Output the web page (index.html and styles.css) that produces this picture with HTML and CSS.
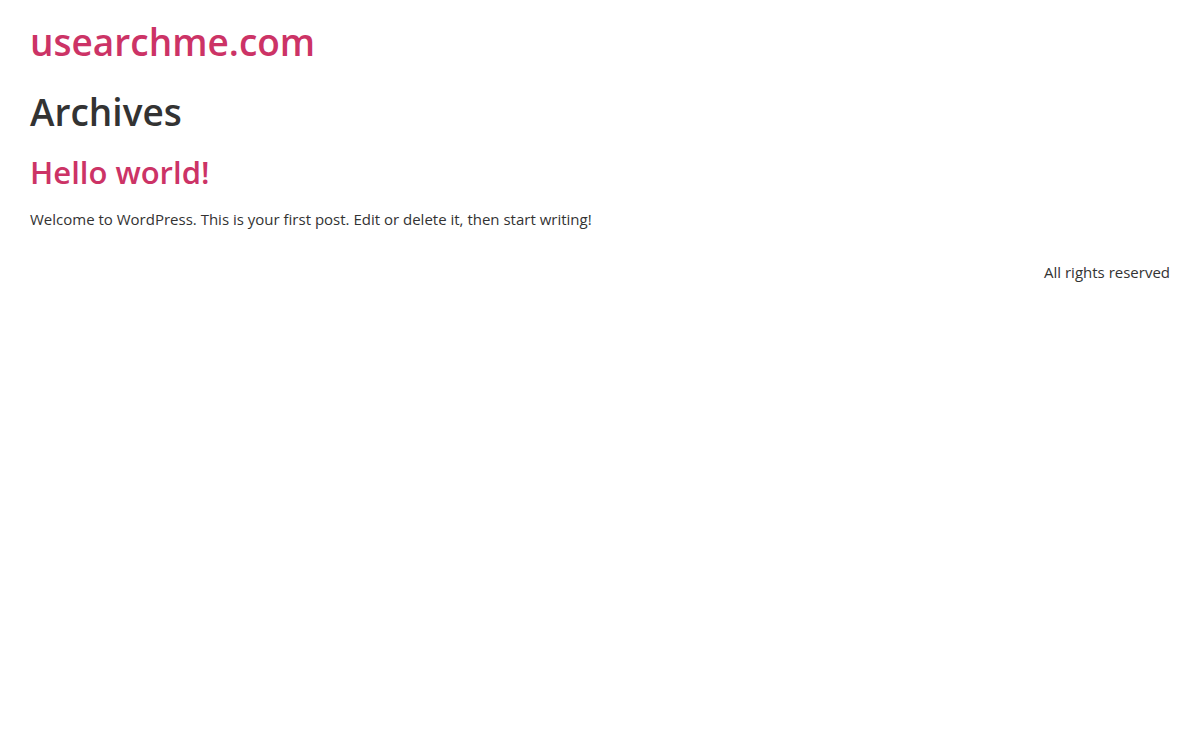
FILE: index.html
```html
<!DOCTYPE html>
<html lang="en">
<head>
<meta charset="utf-8">
<title>Archives - usearchme.com</title>
<link rel="stylesheet" href="styles.css">
</head>
<body>
<header class="site-header">
  <div class="site-branding">
    <h1 class="site-title"><a href="#">usearchme.com</a></h1>
  </div>
</header>
<main class="site-main">
  <div class="page-header">
    <h1 class="entry-title">Archives</h1>
  </div>
  <div class="page-content">
    <article class="post">
      <h2 class="entry-title"><a href="#">Hello world!</a></h2>
      <p>Welcome to WordPress. This is your first post. Edit or delete it, then start writing!</p>
    </article>
  </div>
</main>
<footer class="site-footer">
  <div class="copyright"><p>All rights reserved</p></div>
</footer>
</body>
</html>
```

FILE: styles.css
```css
html { background: #fff; }
body {
  margin: 0;
  font-family: "Open Sans", "Noto Sans", sans-serif;
  font-size: 15px;
  line-height: 1.5;
  color: #333;
  background: #fff;
}
a { color: #c36; text-decoration: none; }
h1, h2 { margin: 0 0 8px; font-weight: 600; line-height: 1.2; }
.site-header, .site-main, .site-footer {
  max-width: 1140px;
  margin: 0 auto;
}
.site-header { padding: 20px 0 18px; }
.site-title { font-size: 37px; margin: 0 0 8px; }
.page-header .entry-title { font-size: 37px; color: #333; }
.page-content .entry-title { font-size: 31px; margin-top: 19px; }
.post p { margin: 17px 0 16px; }
.site-footer { display: flex; justify-content: flex-end; padding: 15px 0; }
.copyright p { margin: 0; }
```
